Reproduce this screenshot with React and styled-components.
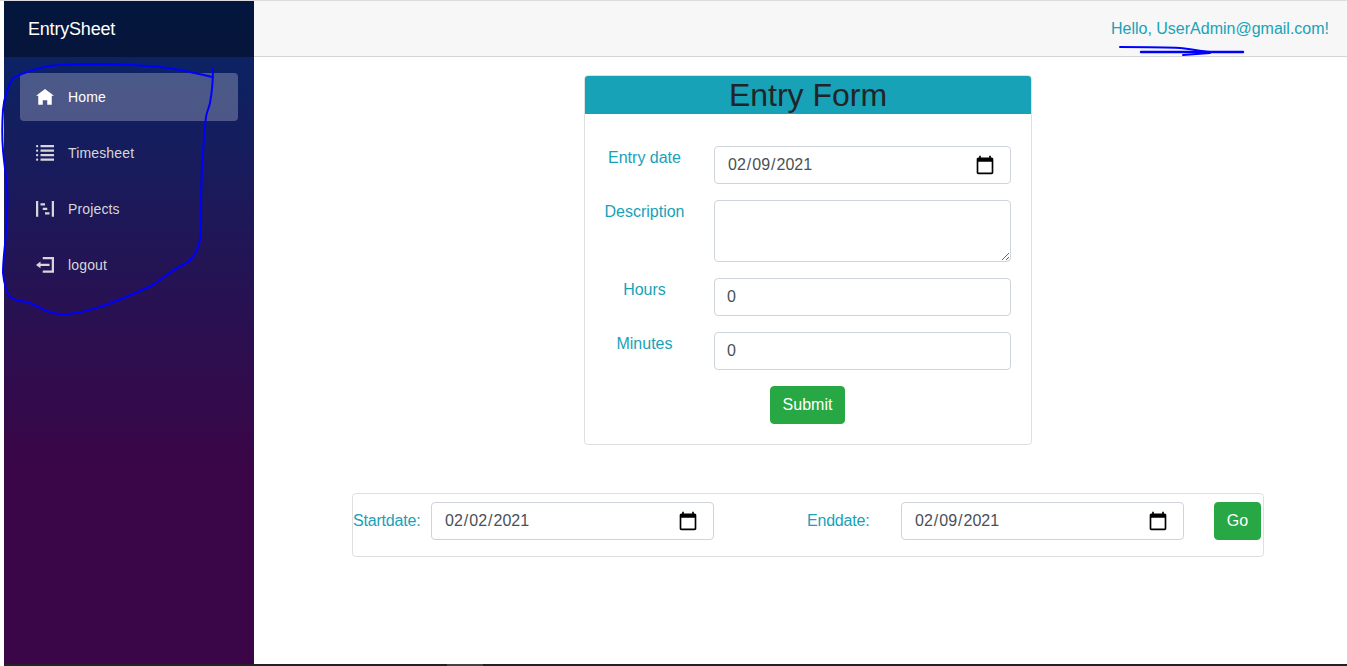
import React from "react";
import styled, { createGlobalStyle } from "styled-components";

const Global = createGlobalStyle`
  html, body { margin: 0; padding: 0; background: #fff; }
  body { font-family: "Liberation Sans", Arial, sans-serif; font-size: 16px; line-height: 24px; color: #212529; overflow: hidden; }
  * { box-sizing: border-box; }
`;

const calendarSvg =
  "data:image/svg+xml,%3Csvg xmlns='http://www.w3.org/2000/svg' viewBox='0 0 24 24'%3E%3Cpath d='M20 3h-1V1h-2v2H7V1H5v2H4c-1.1 0-2 .9-2 2v16c0 1.1.9 2 2 2h16c1.1 0 2-.9 2-2V5c0-1.1-.9-2-2-2zm0 18H4V8h16v13z'/%3E%3C/svg%3E";

const Frame = styled.div`
  position: relative;
  width: 1347px;
  height: 666px;
  padding-left: 4px;
  display: flex;
  flex-direction: column;
  border-top: 1px solid #dcdcde;
  overflow: hidden;
`;

const Shell = styled.div`
  flex: 1;
  display: flex;
  min-height: 0;
`;

const Sidebar = styled.aside`
  width: 250px;
  flex: none;
  background-image: linear-gradient(180deg, rgb(5, 39, 103) 0%, #3a0647 70%);
`;

const Brand = styled.div`
  height: 56px;
  padding-left: 24px;
  display: flex;
  align-items: center;
  background: rgba(0, 0, 0, 0.4);
  color: #fff;
  font-size: 18px;
  letter-spacing: -0.2px;
`;

const Nav = styled.nav`
  padding: 16px 16px 0;
  display: flex;
  flex-direction: column;
  gap: 8px;
`;

const NavItem = styled.a`
  height: 48px;
  padding-left: 16px;
  display: flex;
  align-items: center;
  gap: 14px;
  border-radius: 4px;
  font-size: 14px;
  letter-spacing: 0.15px;
  color: ${(p) => (p.$active ? "#fff" : "#d7d7d7")};
  background: ${(p) => (p.$active ? "rgba(255, 255, 255, 0.25)" : "transparent")};
`;

const Main = styled.main`
  flex: 1;
  min-width: 0;
  display: flex;
  flex-direction: column;
`;

const TopBar = styled.header`
  height: 56px;
  flex: none;
  padding-right: 18px;
  display: flex;
  align-items: center;
  justify-content: flex-end;
  background: #f7f7f7;
  border-bottom: 1px solid #d6d5d5;
  color: #17a2b8;
`;

const Content = styled.div`
  flex: 1;
  padding: 18px 83px 0 98px;
  display: flex;
  flex-direction: column;
  align-items: center;
`;

const Card = styled.section`
  width: 448px;
  height: 370px;
  border: 1px solid rgba(0, 0, 0, 0.125);
  border-radius: 4px;
  overflow: hidden;
`;

const CardHeader = styled.h1`
  margin: 0;
  height: 38px;
  background: #17a2b8;
  text-align: center;
  font-size: 32px;
  font-weight: 400;
  line-height: 38px;
  color: #212529;
`;

const FormGrid = styled.form`
  padding: 32px 20px 0 15px;
  display: grid;
  grid-template-columns: 89px 297px;
  column-gap: 25px;
  row-gap: 16px;
`;

const FieldLabel = styled.label`
  color: #17a2b8;
  text-align: center;
  white-space: nowrap;
`;

const Input = styled.input`
  height: 38px;
  width: ${(p) => p.$width || "100%"};
  flex: none;
  padding: 6px 12px;
  border: 1px solid #ced4da;
  border-radius: 4px;
  background: #fff;
  color: #495057;
  font: inherit;
  line-height: 24px;

  &::-webkit-calendar-picker-indicator {
    width: 20px;
    height: 20px;
    margin: 0 3px 0 0;
    padding: 0;
    background: url("${calendarSvg}") center / 20px 20px no-repeat;
  }
`;

const TextArea = styled.textarea`
  display: block;
  height: 62px;
  width: 100%;
  padding: 6px 12px;
  border: 1px solid #ced4da;
  border-radius: 4px;
  color: #495057;
  font: inherit;
`;

const SubmitRow = styled.div`
  grid-column: 1 / -1;
  display: flex;
  justify-content: center;
  padding-left: 4px;
`;

const Button = styled.button`
  height: 38px;
  width: ${(p) => p.$width};
  padding: 0;
  border: 1px solid #28a745;
  border-radius: 4px;
  background: #28a745;
  color: #fff;
  font: inherit;
`;

const RangePanel = styled.section`
  width: 912px;
  height: 64px;
  margin-top: 48px;
  padding-top: 8px;
  display: flex;
  align-items: flex-start;
  border: 1px solid rgba(0, 0, 0, 0.125);
  border-radius: 4px;
`;

const RangeLabel = styled.label`
  width: ${(p) => p.$width};
  margin-left: ${(p) => p.$offset || "0"};
  flex: none;
  height: 38px;
  line-height: 38px;
  color: #17a2b8;
  letter-spacing: -0.2px;
`;

const GoButton = styled(Button)`
  margin-left: 30px;
`;

const BottomStrip = styled.div`
  height: 2px;
  flex: none;
  background: #222;
  padding-left: 443px;
`;

const StripTab = styled.div`
  width: 36px;
  height: 2px;
  background: #444;
`;

const IconSvg = styled.svg`
  width: 18px;
  height: 16px;
  flex: none;
  fill: currentColor;
`;

const Scribble = styled.svg`
  position: absolute;
  left: 0;
  top: -1px;
  width: 1347px;
  height: 666px;
  pointer-events: none;
  fill: none;
  stroke: #0000ff;
  stroke-linecap: round;
  stroke-linejoin: round;
`;

const Icon = ({ d }) => (
  <IconSvg viewBox="0 0 8 7.11" preserveAspectRatio="none">
    <path d={d} />
  </IconSvg>
);

const icons = {
  home: "M4 0l-4 3h1v4h2v-2h2v2h2v-4.03l1 .03-4-3z",
  list: "M.5 0c-.28 0-.5.22-.5.5s.22.5.5.5.5-.22.5-.5-.22-.5-.5-.5zm1.5 0v1h6v-1h-6zm-1.5 2c-.28 0-.5.22-.5.5s.22.5.5.5.5-.22.5-.5-.22-.5-.5-.5zm1.5 0v1h6v-1h-6zm-1.5 2c-.28 0-.5.22-.5.5s.22.5.5.5.5-.22.5-.5-.22-.5-.5-.5zm1.5 0v1h6v-1h-6zm-1.5 2c-.28 0-.5.22-.5.5s.22.5.5.5.5-.22.5-.5-.22-.5-.5-.5zm1.5 0v1h6v-1h-6z",
  project: "M0 0v7h1v-7h-1zm7 0v7h1v-7h-1zm-5 1v1h2v-1h-2zm1 2v1h2v-1h-2zm1 2v1h2v-1h-2z",
  logout: "M3 0v1h4v5h-4v1h5v-7h-5zm-1 2l-2 1.5 2 1.5v-1h4v-1h-4v-1z",
};

const navItems = [
  { label: "Home", icon: icons.home, active: true },
  { label: "Timesheet", icon: icons.list },
  { label: "Projects", icon: icons.project },
  { label: "logout", icon: icons.logout },
];

export default function App() {
  return (
    <Frame>
      <Global />
      <Shell>
        <Sidebar>
          <Brand>EntrySheet</Brand>
          <Nav>
            {navItems.map((item) => (
              <NavItem key={item.label} $active={item.active}>
                <Icon d={item.icon} />
                {item.label}
              </NavItem>
            ))}
          </Nav>
        </Sidebar>
        <Main>
          <TopBar>Hello, UserAdmin@gmail.com!</TopBar>
          <Content>
            <Card>
              <CardHeader>Entry Form</CardHeader>
              <FormGrid>
                <FieldLabel>Entry date</FieldLabel>
                <Input type="date" defaultValue="2021-02-09" />
                <FieldLabel>Description</FieldLabel>
                <TextArea />
                <FieldLabel>Hours</FieldLabel>
                <Input type="number" defaultValue="0" />
                <FieldLabel>Minutes</FieldLabel>
                <Input type="number" defaultValue="0" />
                <SubmitRow>
                  <Button type="button" $width="75px">Submit</Button>
                </SubmitRow>
              </FormGrid>
            </Card>
            <RangePanel>
              <RangeLabel $width="78px">Startdate:</RangeLabel>
              <Input type="date" defaultValue="2021-02-02" $width="283px" />
              <RangeLabel $width="94px" $offset="93px">Enddate:</RangeLabel>
              <Input type="date" defaultValue="2021-02-09" $width="283px" />
              <GoButton type="button" $width="47px">Go</GoButton>
            </RangePanel>
          </Content>
        </Main>
      </Shell>
      <BottomStrip>
        <StripTab />
      </BottomStrip>
      <Scribble viewBox="0 0 1347 666">
        <path
          strokeWidth="2"
          d="M213 77C195 73 178 69 160 67C140 65 120 64 100 64C82 64 65 64 50 66C35 69 22 73 13 78C7 88 4 98 3 110C2 125 2 138 3 150C4 162 6 175 7 187C8 202 7 218 6 233C5 247 3 260 3 273C4 283 6 291 10 297C15 301 21 301 27 302C38 306 48 314 60 314C73 315 86 311 100 307C118 301 136 293 153 285C163 278 172 270 183 265C190 262 194 256 197 250C200 243 201 235 201 227C201 207 201 187 202 167C203 150 204 133 206 117C207 111 209 108 210 103C212 92 213 80 213 68"
        />
        <path strokeWidth="2" d="M1120 47C1140 47 1165 47 1180 48C1190 49 1200 51 1210 52" />
        <path strokeWidth="2.4" d="M1141 52L1243 52" />
        <path strokeWidth="2" d="M1183 55L1210 53" />
      </Scribble>
    </Frame>
  );
}
